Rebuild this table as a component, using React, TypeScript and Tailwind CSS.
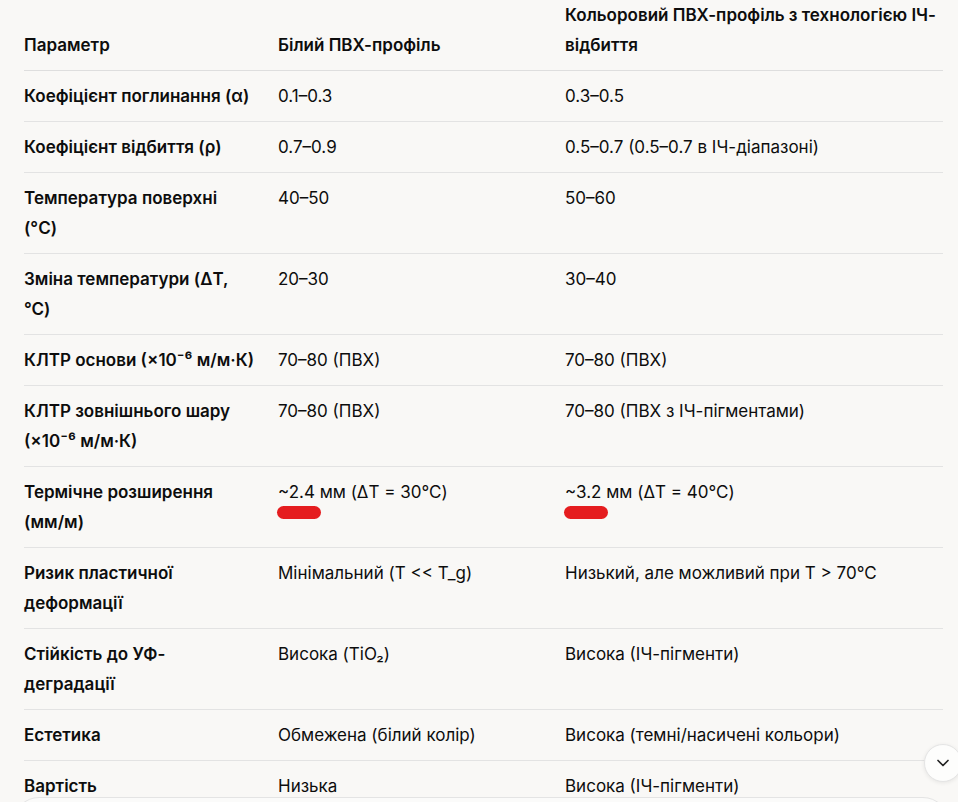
import React from 'react';
import { ChevronDown } from 'lucide-react';

type Row = {
  param: string;
  white: React.ReactNode;
  color: React.ReactNode;
};

// red marker strokes drawn over the values
function Mark({ children }: { children: React.ReactNode }) {
  return (
    <span className="relative">
      {children}
      <span className="pointer-events-none absolute left-[-1px] top-[24px] h-[13px] w-[44px] rounded-full bg-[#e51d1f]" />
    </span>
  );
}

const rows: Row[] = [
  { param: 'Коефіцієнт поглинання (α)', white: '0.1–0.3', color: '0.3–0.5' },
  { param: 'Коефіцієнт відбиття (ρ)', white: '0.7–0.9', color: '0.5–0.7 (0.5–0.7 в ІЧ-діапазоні)' },
  { param: 'Температура поверхні (°C)', white: '40–50', color: '50–60' },
  { param: 'Зміна температури (ΔT, °C)', white: '20–30', color: '30–40' },
  { param: 'КЛТР основи (×10⁻⁶ м/м·К)', white: '70–80 (ПВХ)', color: '70–80 (ПВХ)' },
  { param: 'КЛТР зовнішнього шару (×10⁻⁶ м/м·К)', white: '70–80 (ПВХ)', color: '70–80 (ПВХ з ІЧ-пігментами)' },
  {
    param: 'Термічне розширення (мм/м)',
    white: (
      <>
        <Mark>~2.4</Mark> мм (ΔT = 30°C)
      </>
    ),
    color: (
      <>
        <Mark>~3.2</Mark> мм (ΔT = 40°C)
      </>
    ),
  },
  { param: 'Ризик пластичної деформації', white: 'Мінімальний (T << T_g)', color: 'Низький, але можливий при T > 70°C' },
  { param: 'Стійкість до УФ-деградації', white: 'Висока (TiO₂)', color: 'Висока (ІЧ-пігменти)' },
  { param: 'Естетика', white: 'Обмежена (білий колір)', color: 'Висока (темні/насичені кольори)' },
  { param: 'Вартість', white: 'Низька', color: 'Висока (ІЧ-пігменти)' },
];

export default function App() {
  return (
    <div
      className="relative h-[802px] w-[958px] overflow-hidden bg-[#f9f8f6] text-[#0d0d0d]"
      style={{ fontFamily: 'Inter, "Noto Sans", sans-serif' }}
    >
      <div className="pl-[24px] pr-[15px]">
        <table className="w-full table-fixed border-collapse text-[17px] leading-[30px]">
          <colgroup>
            <col className="w-[254px]" />
            <col className="w-[287px]" />
            <col />
          </colgroup>
          <thead>
            <tr className="border-b border-[#dedede]">
              <th className="pb-[10px] pr-[24px] text-left align-bottom font-semibold">Параметр</th>
              <th className="pb-[10px] pr-[16px] text-left align-bottom font-semibold">Білий ПВХ-профіль</th>
              <th className="pb-[10px] text-left align-bottom font-semibold">
                Кольоровий ПВХ-профіль з технологією ІЧ-відбиття
              </th>
            </tr>
          </thead>
          <tbody>
            {rows.map((r, i) => (
              <tr key={i} className="border-b border-[#e3e3e3] last:border-b-0">
                <td className="break-words py-[10px] pr-[24px] align-top font-semibold">{r.param}</td>
                <td className="py-[10px] pr-[16px] align-top">{r.white}</td>
                <td className="py-[10px] align-top">{r.color}</td>
              </tr>
            ))}
          </tbody>
        </table>
      </div>

      {/* scroll-to-bottom button */}
      <button
        className="absolute left-[924px] top-[744px] flex h-[38px] w-[38px] items-center justify-center rounded-full border border-[#e5e5e5] bg-[#fdfdfc] text-[#222] shadow-[0_1px_4px_rgba(0,0,0,0.08)]"
        aria-label="Scroll down"
      >
        <ChevronDown size={20} strokeWidth={2} />
      </button>

      {/* composer edge */}
      <div className="absolute left-[13px] right-[9px] top-[797px] h-[80px] rounded-[26px] border border-[#e4e4e4] bg-[#fbfbfa]" />
    </div>
  );
}
